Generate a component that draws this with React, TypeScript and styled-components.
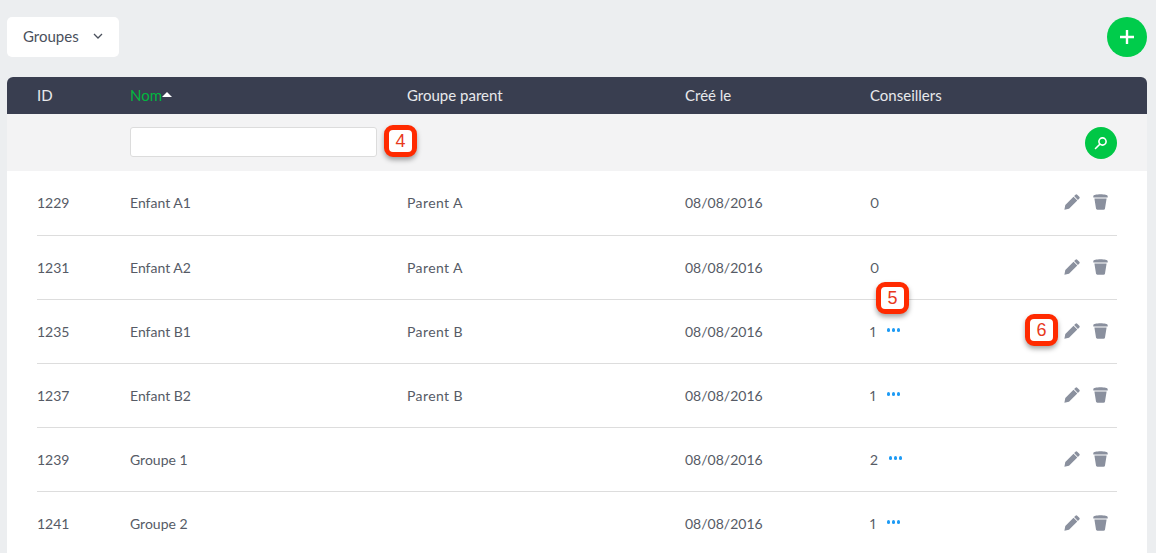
import React from "react";
import styled, { createGlobalStyle } from "styled-components";

interface Group {
  id: number;
  name: string;
  parent: string;
  created: string;
  advisors: number;
}

const groups: Group[] = [
  { id: 1229, name: "Enfant A1", parent: "Parent A", created: "08/08/2016", advisors: 0 },
  { id: 1231, name: "Enfant A2", parent: "Parent A", created: "08/08/2016", advisors: 0 },
  { id: 1235, name: "Enfant B1", parent: "Parent B", created: "08/08/2016", advisors: 1 },
  { id: 1237, name: "Enfant B2", parent: "Parent B", created: "08/08/2016", advisors: 1 },
  { id: 1239, name: "Groupe 1", parent: "", created: "08/08/2016", advisors: 2 },
  { id: 1241, name: "Groupe 2", parent: "", created: "08/08/2016", advisors: 1 },
];

const columns = "93px 277px 278px 185px 1fr 55px";

const GlobalStyle = createGlobalStyle`
  html, body {
    margin: 0;
    height: 553px;
    overflow: hidden;
    background: #eceef0;
    font-family: Lato, "Liberation Sans", sans-serif;
  }
`;

const Page = styled.div`
  position: relative;
  height: 553px;
  padding: 17px 9px 0 7px;
  box-sizing: border-box;
  overflow: hidden;
`;

const TopBar = styled.div`
  display: flex;
  justify-content: space-between;
  align-items: center;
  margin-bottom: 20px;
`;

const Dropdown = styled.button`
  display: flex;
  align-items: center;
  gap: 14px;
  width: 112px;
  height: 40px;
  padding: 0 0 2px 16px;
  box-sizing: border-box;
  border: 0;
  border-radius: 5px;
  background: #fff;
  color: #4a505c;
  font: inherit;
  font-size: 15px;
`;

const AddButton = styled.button`
  display: flex;
  align-items: center;
  justify-content: center;
  width: 40px;
  height: 40px;
  padding: 0;
  border: 0;
  border-radius: 50%;
  background: #00cc4b;
`;

const Table = styled.div`
  background: #fff;
  border-radius: 6px 6px 0 0;
  overflow: hidden;
`;

const HeaderRow = styled.div`
  display: grid;
  grid-template-columns: ${columns};
  align-items: center;
  height: 37px;
  padding: 0 30px 2px;
  box-sizing: border-box;
  background: #393e50;
  color: #e8e9ec;
  font-size: 15px;
`;

const SortLabel = styled.span`
  display: flex;
  align-items: center;
  color: #00b83f;
`;

const SortArrow = styled.span`
  width: 0;
  height: 0;
  margin: 0 0 1px 0;
  border-left: 5px solid transparent;
  border-right: 5px solid transparent;
  border-bottom: 5px solid #fff;
`;

const FilterRow = styled.div`
  display: grid;
  grid-template-columns: 93px 1fr 32px;
  align-items: start;
  height: 57px;
  padding: 13px 30px 0;
  box-sizing: border-box;
  background: #f3f3f4;
`;

const FilterInput = styled.input`
  grid-column: 2;
  width: 247px;
  height: 30px;
  box-sizing: border-box;
  border: 1px solid #dcdcdc;
  border-radius: 3px;
  background: #fff;
`;

const SearchButton = styled.button`
  display: flex;
  align-items: center;
  justify-content: center;
  width: 32px;
  height: 32px;
  padding: 0;
  border: 0;
  border-radius: 50%;
  background: #00c746;
`;

const RowList = styled.div`
  padding: 0 30px;
`;

const Row = styled.div`
  display: grid;
  grid-template-columns: ${columns};
  align-items: center;
  height: 64px;
  box-sizing: border-box;
  border-bottom: 1px solid #dddddd;
  color: #565b66;
  font-size: 14px;

  &:first-child {
    height: 65px;
    padding-bottom: 1px;
  }
`;

const ParentName = styled.span`
  letter-spacing: 0.4px;
`;

const Count = styled.div`
  display: flex;
  align-items: center;
  gap: 11px;
  font-feature-settings: "pnum";
`;

const Dots = styled.span`
  display: flex;
  gap: 1.5px;
  margin-top: -3px;

  i {
    width: 3.5px;
    height: 3.5px;
    border-radius: 50%;
    background: #1e9bf5;
  }
`;

const Actions = styled.div`
  display: flex;
  justify-content: flex-end;
  align-items: center;
  gap: 13px;
  padding-right: 9px;
  margin-top: -2px;
`;

const Callout = styled.div<{ $left: number; $top: number }>`
  position: absolute;
  left: ${(p) => p.$left}px;
  top: ${(p) => p.$top}px;
  display: flex;
  align-items: center;
  justify-content: center;
  width: 23px;
  height: 22px;
  border: 5px solid #ff2a00;
  border-radius: 9px;
  background: #fff;
  color: #e8391c;
  font-family: "Liberation Sans", sans-serif;
  font-size: 18px;
  box-shadow: 0 3px 5px rgba(0, 0, 0, 0.35);
`;

const Chevron = () => (
  <svg width="10" height="6" viewBox="0 0 10 6" fill="none">
    <path d="M1 1l4 4 4-4" stroke="#4a505c" strokeWidth="1.3" />
  </svg>
);

const Plus = () => (
  <svg width="14" height="14" viewBox="0 0 14 14">
    <path d="M7 0.5v13M0.5 7h13" stroke="#fff" strokeWidth="2.4" strokeLinecap="round" />
  </svg>
);

const Magnifier = () => (
  <svg width="14" height="14" viewBox="0 0 14 14" fill="none">
    <circle cx="8.5" cy="5.5" r="3.6" stroke="#fff" strokeWidth="1.6" />
    <path d="M5.8 8.2L1.5 12.5" stroke="#fff" strokeWidth="1.6" strokeLinecap="round" />
  </svg>
);

const Pencil = () => (
  <svg width="16" height="16" viewBox="0 0 16 16">
    <path d="M11.5 0.7a1.2 1.2 0 0 1 1.7 0l2.1 2.1a1.2 1.2 0 0 1 0 1.7l-1.4 1.4-3.8-3.8zM9.5 2.7l3.8 3.8-8.3 8.2-4.6 1 0.9-4.7z" fill="#8a909e" />
  </svg>
);

const Trash = () => (
  <svg width="15" height="16" viewBox="0 0 15 16">
    <path d="M0.3 2.2C0.3 1 3.6 0.3 7.5 0.3s7.2 0.7 7.2 1.9V3.6H0.3zM1.4 4.6h12.2l-1.6 10c-0.1 0.8-0.6 1.2-1.4 1.2H4.4c-0.8 0-1.3-0.4-1.4-1.2z" fill="#8a909e" />
  </svg>
);

const App: React.FC = () => (
  <>
    <GlobalStyle />
    <Page>
      <TopBar>
        <Dropdown>
          Groupes
          <Chevron />
        </Dropdown>
        <AddButton>
          <Plus />
        </AddButton>
      </TopBar>
      <Table>
        <HeaderRow>
          <span>ID</span>
          <SortLabel>
            Nom
            <SortArrow />
          </SortLabel>
          <span>Groupe parent</span>
          <span>Créé le</span>
          <span>Conseillers</span>
        </HeaderRow>
        <FilterRow>
          <FilterInput />
          <SearchButton>
            <Magnifier />
          </SearchButton>
        </FilterRow>
        <RowList>
          {groups.map((group) => (
            <Row key={group.id}>
              <span>{group.id}</span>
              <span>{group.name}</span>
              <ParentName>{group.parent}</ParentName>
              <span>{group.created}</span>
              <Count>
                {group.advisors}
                {group.advisors > 0 && (
                  <Dots>
                    <i />
                    <i />
                    <i />
                  </Dots>
                )}
              </Count>
              <Actions>
                <Pencil />
                <Trash />
              </Actions>
            </Row>
          ))}
        </RowList>
      </Table>
      <Callout $left={384} $top={125}>4</Callout>
      <Callout $left={876} $top={282}>5</Callout>
      <Callout $left={1025} $top={314}>6</Callout>
    </Page>
  </>
);

export default App;
